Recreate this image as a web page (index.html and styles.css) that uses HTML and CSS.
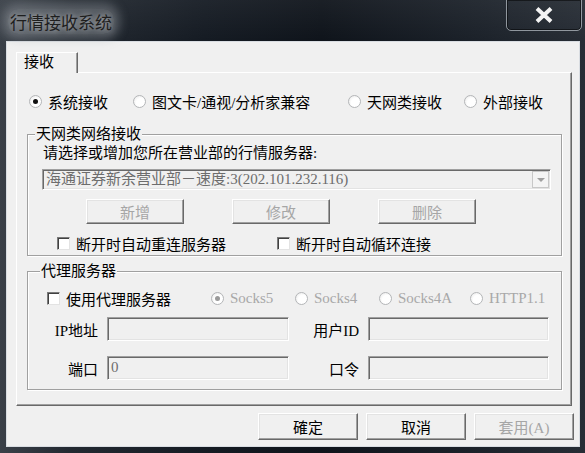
FILE: index.html
```html
<!DOCTYPE html>
<html lang="zh-CN">
<head>
    <meta charset="UTF-8">
    <title>行情接收系统</title>
    <link rel="stylesheet" href="styles.css">
</head>
<body>
    <div id="dialog">
        <div class="titlebar">
            <span class="title">行情接收系统</span>
            <div class="close-btn">
                <svg width="20" height="16" viewBox="0 0 20 16">
                    <path d="M3 1.5 L17 14.5 M17 1.5 L3 14.5" stroke="#f4f4f4" stroke-width="4" stroke-linecap="butt"/>
                </svg>
            </div>
        </div>

        <div class="client">
            <div class="tabs">
                <div class="tab active">接收</div>
            </div>

            <div class="tab-panel">
                <!-- receive mode -->
                <div class="mode-row">
                    <label class="opt"><span class="radio checked"></span>系统接收</label>
                    <label class="opt"><span class="radio"></span>图文卡/通视/分析家兼容</label>
                    <label class="opt"><span class="radio"></span>天网类接收</label>
                    <label class="opt"><span class="radio"></span>外部接收</label>
                </div>

                <fieldset class="group group-net">
                    <legend>天网类网络接收</legend>
                    <p class="prompt">请选择或增加您所在营业部的行情服务器:</p>
                    <div class="combo">
                        <span class="combo-text">海通证券新余营业部－速度:3(202.101.232.116)</span>
                        <span class="combo-arrow"><span class="tri"></span></span>
                    </div>
                    <div class="btn-row">
                        <button class="btn small" disabled>新增</button>
                        <button class="btn small" disabled>修改</button>
                        <button class="btn small" disabled>删除</button>
                    </div>
                    <div class="check-row">
                        <label class="opt"><span class="checkbox"></span>断开时自动重连服务器</label>
                        <label class="opt"><span class="checkbox"></span>断开时自动循环连接</label>
                    </div>
                </fieldset>

                <fieldset class="group group-proxy">
                    <legend>代理服务器</legend>
                    <div class="proxy-row">
                        <label class="opt"><span class="checkbox"></span>使用代理服务器</label>
                        <label class="opt off"><span class="radio checked"></span>Socks5</label>
                        <label class="opt off"><span class="radio"></span>Socks4</label>
                        <label class="opt off"><span class="radio"></span>Socks4A</label>
                        <label class="opt off"><span class="radio"></span>HTTP1.1</label>
                    </div>
                    <div class="proxy-grid">
                        <span class="field-label">IP地址</span>
                        <div class="field"></div>
                        <span class="field-label">用户ID</span>
                        <div class="field"></div>
                        <span class="field-label">端口</span>
                        <div class="field">0</div>
                        <span class="field-label">口令</span>
                        <div class="field"></div>
                    </div>
                </fieldset>
            </div>

            <div class="footer">
                <button class="btn">確定</button>
                <button class="btn">取消</button>
                <button class="btn" disabled>套用(A)</button>
            </div>
        </div>
    </div>
</body>
</html>
```

FILE: styles.css
```css
/* Page */
body {
    margin: 0;
    background: #141a22;
    font-family: "Liberation Serif", "Noto Sans CJK SC", serif;
}

/* Window frame */
#dialog {
    width: 585px;
    height: 453px;
    box-sizing: border-box;
    background:
        linear-gradient(180deg, rgba(255, 255, 255, 0.05), rgba(0, 0, 0, 0) 40px),
        linear-gradient(90deg, #3a4048 0%, #232931 12%, #151b23 35%, #0f141b 55%, #1b2129 80%, #272d35 100%);
}

.titlebar {
    height: 41px;
    display: flex;
    align-items: flex-start;
}

.title {
    align-self: center;
    margin-left: 8px;
    margin-top: 2px;
    padding: 0 2px;
    font-family: "Noto Sans CJK SC", sans-serif;
    font-size: 17px;
    color: #1e1e1e;
    border-radius: 10px;
    background: rgba(170, 174, 180, 0.35);
    box-shadow: 0 0 10px 6px rgba(170, 174, 180, 0.35);
    text-shadow: 0 0 6px rgba(255, 255, 255, 0.7);
}

.close-btn {
    margin-left: auto;
    margin-right: 3px;
    margin-top: -1px;
    width: 76px;
    height: 32px;
    box-sizing: border-box;
    border: 1px solid rgba(190, 196, 204, 0.7);
    border-radius: 0 0 5px 5px;
    box-shadow: inset 0 0 0 1px rgba(0, 0, 0, 0.5);
    display: flex;
    align-items: center;
    justify-content: center;
}

/* Client area */
.client {
    margin-left: 6px;
    width: 574px;
    height: 406px;
    box-sizing: border-box;
    border: 1px solid #d9dde2;
    background: #f0f0f0;
    font-size: 15px;
    color: #000;
}

.tabs {
    padding: 10px 0 0 9px;
    display: flex;
}

.tab {
    position: relative;
    z-index: 1;
    margin-bottom: -1px;
    width: 62px;
    height: 21px;
    box-sizing: border-box;
    padding-left: 7px;
    line-height: 19px;
    background: #f0f0f0;
    border-top: 1px solid #fff;
    border-left: 1px solid #fff;
    border-right: 1px solid #696969;
    box-shadow: inset -1px 0 0 #a0a0a0;
}

.tab-panel {
    margin-left: 9px;
    width: 556px;
    height: 334px;
    box-sizing: border-box;
    padding: 0 9px 0 10px;
    border-top: 1px solid #fff;
    border-left: 1px solid #fff;
    border-right: 1px solid #696969;
    border-bottom: 1px solid #696969;
    box-shadow: inset -1px -1px 0 #a0a0a0;
}

/* Options */
.opt {
    display: flex;
    align-items: center;
    gap: 6px;
    white-space: nowrap;
}

.opt.off {
    color: #a8a8a8;
    font-family: "Liberation Serif", serif;
}

.radio {
    width: 13px;
    height: 13px;
    box-sizing: border-box;
    border-radius: 50%;
    border: 1px solid #b4b6b8;
    background: radial-gradient(circle at 60% 60%, #fff 45%, #e4e4e4);
    display: grid;
    place-items: center;
    flex: none;
}

.radio.checked::after {
    content: "";
    width: 5px;
    height: 5px;
    border-radius: 50%;
    background: #111;
}

.opt.off .radio.checked::after {
    background: #9a9a9a;
}

.checkbox {
    width: 13px;
    height: 13px;
    box-sizing: border-box;
    border-style: solid;
    border-width: 1px;
    border-color: #7a7a7a #e3e3e3 #e3e3e3 #7a7a7a;
    box-shadow: inset 1px 1px 0 #404040;
    background: #fff;
    flex: none;
}

.mode-row {
    margin-top: 18px;
    height: 20px;
    padding-left: 2px;
    display: grid;
    grid-template-columns: 104px 215px 116px auto;
}

/* Group boxes */
.group {
    margin: 0;
    padding: 0;
    border: 1px solid #a0a0a0;
    box-shadow: inset 1px 1px 0 #fff, 1px 1px 0 #fff;
}

.group legend {
    margin-left: 7px;
    padding: 0 1px;
    line-height: 18px;
    background: #f0f0f0;
}

.group-net {
    margin-top: 14px;
    padding-bottom: 3px;
}

.group-proxy {
    margin-top: 6px;
    padding-bottom: 9px;
}

.group-proxy legend {
    margin-left: 12px;
}

.prompt {
    margin: 1px 0 0 15px;
    line-height: 18px;
}

.combo {
    margin: 7px 10px 0 14px;
    height: 21px;
    box-sizing: border-box;
    display: flex;
    border-style: solid;
    border-width: 1px;
    border-color: #a0a0a0 #fff #fff #a0a0a0;
    box-shadow: inset 1px 1px 0 #696969, inset -1px -1px 0 #e3e3e3;
}

.combo-text {
    flex: 1;
    padding-left: 3px;
    line-height: 19px;
    color: #6d6d6d;
    white-space: nowrap;
    overflow: hidden;
}

.combo-arrow {
    width: 17px;
    margin: 1px 1px 1px 0;
    box-sizing: border-box;
    border: 1px solid #c8c8c8;
    background: #f4f4f4;
    display: grid;
    place-items: center;
}

.tri {
    width: 0;
    height: 0;
    border-left: 4px solid transparent;
    border-right: 4px solid transparent;
    border-top: 4px solid #a0a0a0;
}

/* Buttons */
.btn {
    width: 100px;
    height: 27px;
    padding: 0;
    font: inherit;
    color: #000;
    background: #f0f0f0;
    border-style: solid;
    border-width: 1px;
    border-color: #fff #696969 #696969 #fff;
    box-shadow: inset -1px -1px 0 #a0a0a0, inset 1px 1px 0 #e3e3e3;
}

.btn:disabled {
    color: #a6a6a6;
}

.btn.small {
    width: 98px;
    height: 25px;
}

.btn-row {
    margin-top: 9px;
    padding-left: 58px;
    display: flex;
    gap: 48px;
}

.check-row {
    margin-top: 9px;
    height: 19px;
    padding-left: 29px;
    display: grid;
    grid-template-columns: 220px auto;
}

/* Proxy */
.proxy-row {
    margin-top: 8px;
    height: 20px;
    padding-left: 19px;
    display: grid;
    grid-template-columns: 164px 84px 84px 91px auto;
}

.proxy-grid {
    margin-top: 9px;
    display: grid;
    grid-template-columns: 79px 182px 79px 181px;
    grid-auto-rows: 24px;
    row-gap: 15px;
}

.field-label {
    align-self: center;
    text-align: right;
    padding-right: 9px;
}

.field {
    box-sizing: border-box;
    padding-left: 3px;
    line-height: 20px;
    color: #6d6d6d;
    border-style: solid;
    border-width: 1px;
    border-color: #a0a0a0 #fff #fff #a0a0a0;
    box-shadow: inset 1px 1px 0 #696969, inset -1px -1px 0 #e3e3e3;
}

/* Footer */
.footer {
    margin-top: 7px;
    padding-right: 5px;
    display: flex;
    justify-content: flex-end;
    gap: 8px;
}
```
